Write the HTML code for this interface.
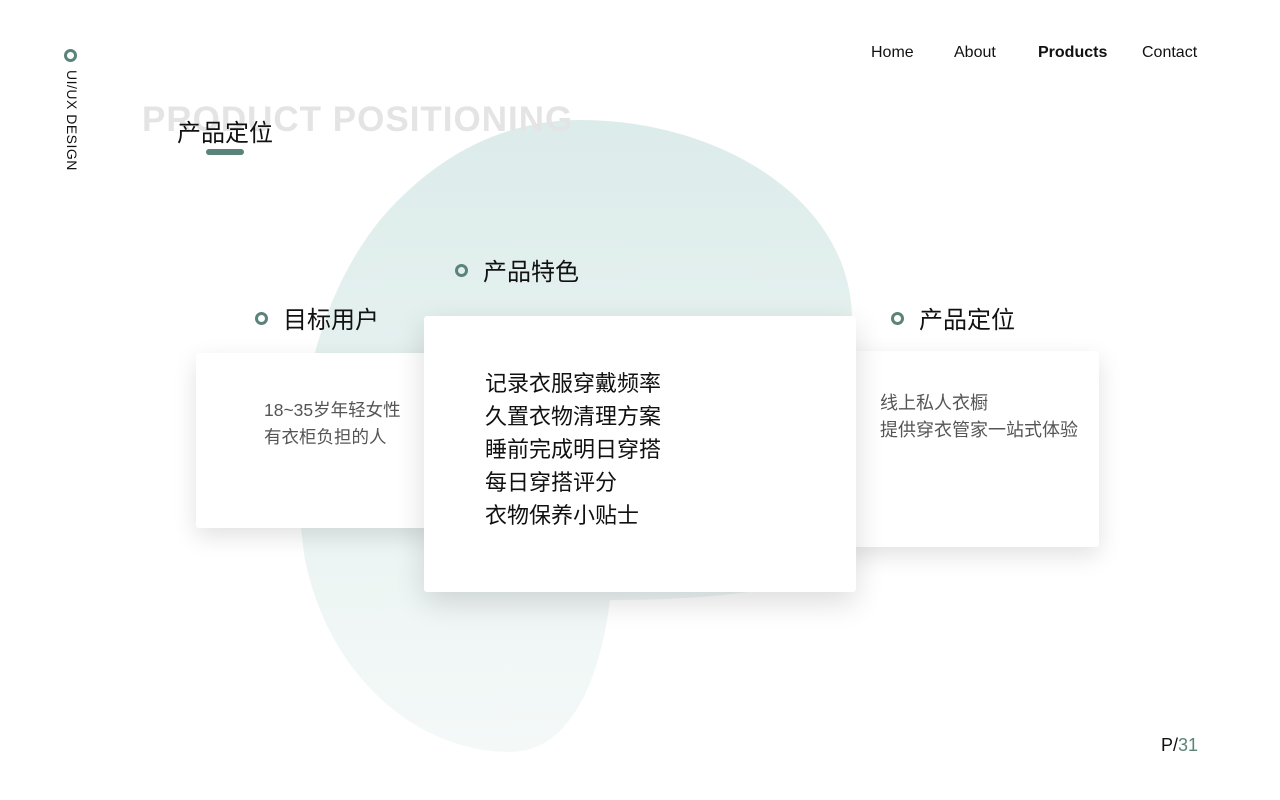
<!DOCTYPE html>
<html><head><meta charset="utf-8"><style>
*{margin:0;padding:0;box-sizing:border-box}
body{width:1280px;height:800px;background:#fff;position:relative;overflow:hidden;font-family:"Liberation Sans","Noto Sans CJK SC",sans-serif;color:#111}
.abs{position:absolute}
.nav{top:44px;font-size:16px;color:#111}
.ring{position:absolute;width:13px;height:13px;border:3px solid #5a8479;border-radius:50%}
.card{position:absolute;background:#fff;box-shadow:0 8px 24px rgba(0,0,0,.12);border-radius:3px}
.h{position:absolute;font-size:24px;color:#111}
</style></head><body>
<svg class="abs" style="left:0;top:0" width="1280" height="800">
<defs><linearGradient id="g" x1="0" y1="0" x2="0" y2="1"><stop offset="0" stop-color="#dcecea"/><stop offset="1" stop-color="#f4f9f8"/></linearGradient></defs>
<path d="M580 120 C720 120 852 200 852 320 L852 560 C800 600 640 600 610 600 C600 680 570 752 510 752 C420 752 330 680 305 560 C290 460 300 320 380 220 C440 150 510 120 580 120 Z" fill="url(#g)"/>
</svg>
<div class="ring" style="left:64px;top:49px"></div>
<div class="abs" style="left:62px;top:70px;width:18px;height:110px;writing-mode:vertical-rl;font-size:14px;letter-spacing:0.5px;color:#111">UI/UX DESIGN</div>
<div class="abs" style="left:142px;top:100px;font-size:35px;font-weight:bold;color:#e4e4e4;letter-spacing:1px">PRODUCT POSITIONING</div>
<div class="abs" style="left:177px;top:113px;font-size:24px">产品定位</div>
<div class="abs" style="left:206px;top:149px;width:38px;height:6px;border-radius:3px;background:#5a8479"></div>
<div class="abs nav" style="left:871px">Home</div>
<div class="abs nav" style="left:954px">About</div>
<div class="abs nav" style="left:1038px;font-weight:bold">Products</div>
<div class="abs nav" style="left:1142px">Contact</div>
<div class="ring" style="left:455px;top:264px"></div>
<div class="h" style="left:483px;top:252px">产品特色</div>
<div class="ring" style="left:255px;top:312px"></div>
<div class="h" style="left:283px;top:300px">目标用户</div>
<div class="ring" style="left:891px;top:312px"></div>
<div class="h" style="left:919px;top:300px">产品定位</div>
<div class="card" style="left:196px;top:353px;width:240px;height:175px"></div>
<div class="abs" style="left:264px;top:397px;font-size:17.5px;line-height:27px;color:#555">18~35岁年轻女性<br>有衣柜负担的人</div>
<div class="card" style="left:845px;top:351px;width:254px;height:196px"></div>
<div class="abs" style="left:880px;top:390px;font-size:18px;line-height:27px;color:#555">线上私人衣橱<br>提供穿衣管家一站式体验</div>
<div class="card" style="left:424px;top:316px;width:432px;height:276px;box-shadow:0 10px 30px rgba(0,0,0,.14)"></div>
<div class="abs" style="left:485px;top:367px;font-size:22px;line-height:33px;color:#111">记录衣服穿戴频率<br>久置衣物清理方案<br>睡前完成明日穿搭<br>每日穿搭评分<br>衣物保养小贴士</div>
<div class="abs" style="left:1161px;top:735px;font-size:18px;color:#111">P/<span style="color:#5a8479">31</span></div>
</body></html>
